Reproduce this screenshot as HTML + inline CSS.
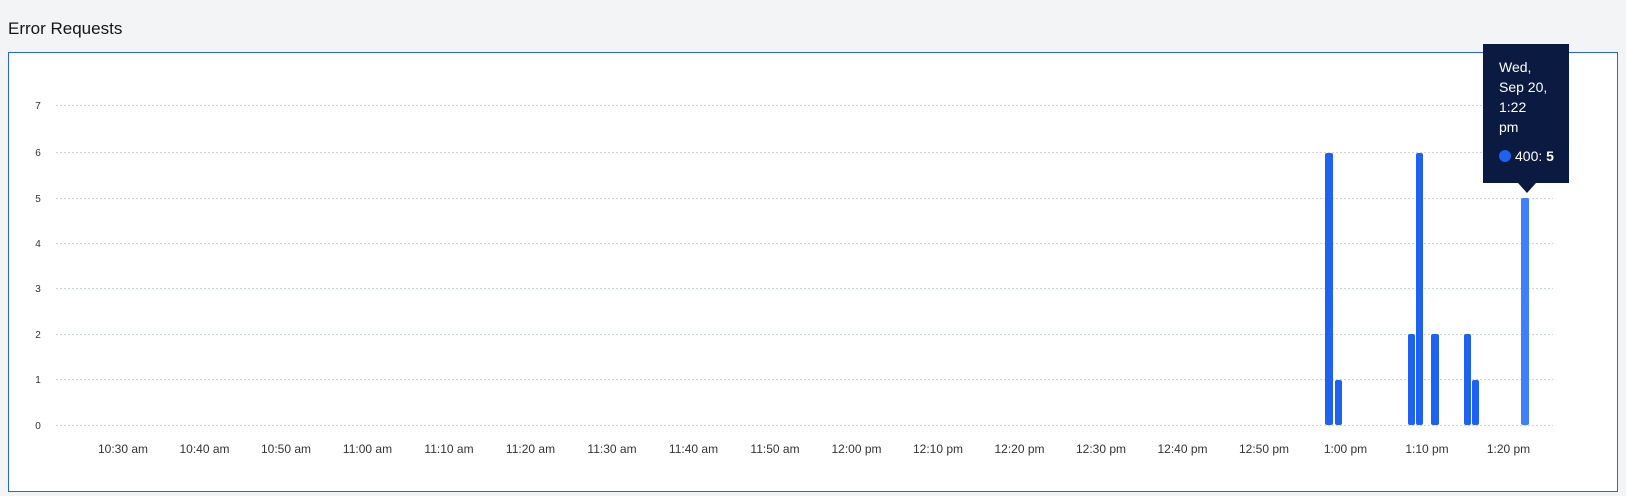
<!DOCTYPE html>
<html><head><meta charset="utf-8"><style>
body{margin:0;width:1626px;height:496px;background:#f3f4f6;font-family:"Liberation Sans",sans-serif;overflow:hidden;position:relative}
.t{position:absolute;left:8px;top:19px;font-size:17px;color:#161616}
.box{position:absolute;left:8px;top:52px;width:1608px;height:438px;border:1px solid #2563eb;background:#fff;box-sizing:content-box}
svg{position:absolute;left:0;top:0}
.tip{position:absolute;left:1483px;top:44px;width:86px;height:139px;background:#0a1a40;color:#fff;font-size:14px}
.tip .d{position:absolute;left:16px;top:13px;line-height:20px}
.tip .v{position:absolute;left:32px;top:104px}
.tip .c{position:absolute;left:16px;top:106px;width:12px;height:12px;border-radius:50%;background:#1f62f0}
.arr{position:absolute;left:1518px;top:183px;width:0;height:0;border-left:9px solid transparent;border-right:9px solid transparent;border-top:10px solid #0a1a40}
</style></head><body>
<div class="t">Error Requests</div>
<div class="box"></div>
<svg width="1626" height="496" font-family="Liberation Sans, sans-serif">
<g stroke="#d0d5dd" stroke-width="1" stroke-dasharray="2,2">
<line x1="56" x2="1553" y1="105.5" y2="105.5"/>
<line x1="56" x2="1553" y1="152.5" y2="152.5"/>
<line x1="56" x2="1553" y1="198.5" y2="198.5"/>
<line x1="56" x2="1553" y1="243.5" y2="243.5"/>
<line x1="56" x2="1553" y1="288.5" y2="288.5"/>
<line x1="56" x2="1553" y1="334.5" y2="334.5"/>
<line x1="56" x2="1553" y1="379.5" y2="379.5"/>
<line x1="56" x2="1553" y1="425.5" y2="425.5"/>
</g>
<g font-size="10" fill="#333" text-anchor="middle">
<text x="38" y="109">7</text><text x="38" y="156">6</text><text x="38" y="202">5</text><text x="38" y="247">4</text>
<text x="38" y="292">3</text><text x="38" y="338">2</text><text x="38" y="383">1</text><text x="38" y="429">0</text>
</g>
<g font-size="12" fill="#333" text-anchor="middle">
<text x="123" y="453">10:30 am</text><text x="204.5" y="453">10:40 am</text><text x="286" y="453">10:50 am</text>
<text x="367.5" y="453">11:00 am</text><text x="449" y="453">11:10 am</text><text x="530.5" y="453">11:20 am</text>
<text x="612" y="453">11:30 am</text><text x="693.5" y="453">11:40 am</text><text x="775" y="453">11:50 am</text>
<text x="856.5" y="453">12:00 pm</text><text x="938" y="453">12:10 pm</text><text x="1019.5" y="453">12:20 pm</text>
<text x="1101" y="453">12:30 pm</text><text x="1182.5" y="453">12:40 pm</text><text x="1264" y="453">12:50 pm</text>
<text x="1345.5" y="453">1:00 pm</text><text x="1427" y="453">1:10 pm</text><text x="1508.5" y="453">1:20 pm</text>
</g>
<g fill="#1f62f0">
<rect x="1325" y="153" width="8" height="272" rx="2"/>
<rect x="1335" y="380" width="7" height="45" rx="2"/>
<rect x="1408" y="334" width="7" height="91" rx="2"/>
<rect x="1416" y="153" width="7" height="272" rx="2"/>
<rect x="1431" y="334" width="8" height="91" rx="2"/>
<rect x="1464" y="334" width="7" height="91" rx="2"/>
<rect x="1472" y="380" width="7" height="45" rx="2"/>
<rect x="1521" y="198" width="8" height="227" rx="2" fill="#3f7efc"/>
</g>
</svg>
<div class="tip"><div class="d">Wed,<br>Sep 20,<br>1:22<br>pm</div><div class="c"></div><div class="v">400: <b>5</b></div></div>
<div class="arr"></div>
</body></html>
